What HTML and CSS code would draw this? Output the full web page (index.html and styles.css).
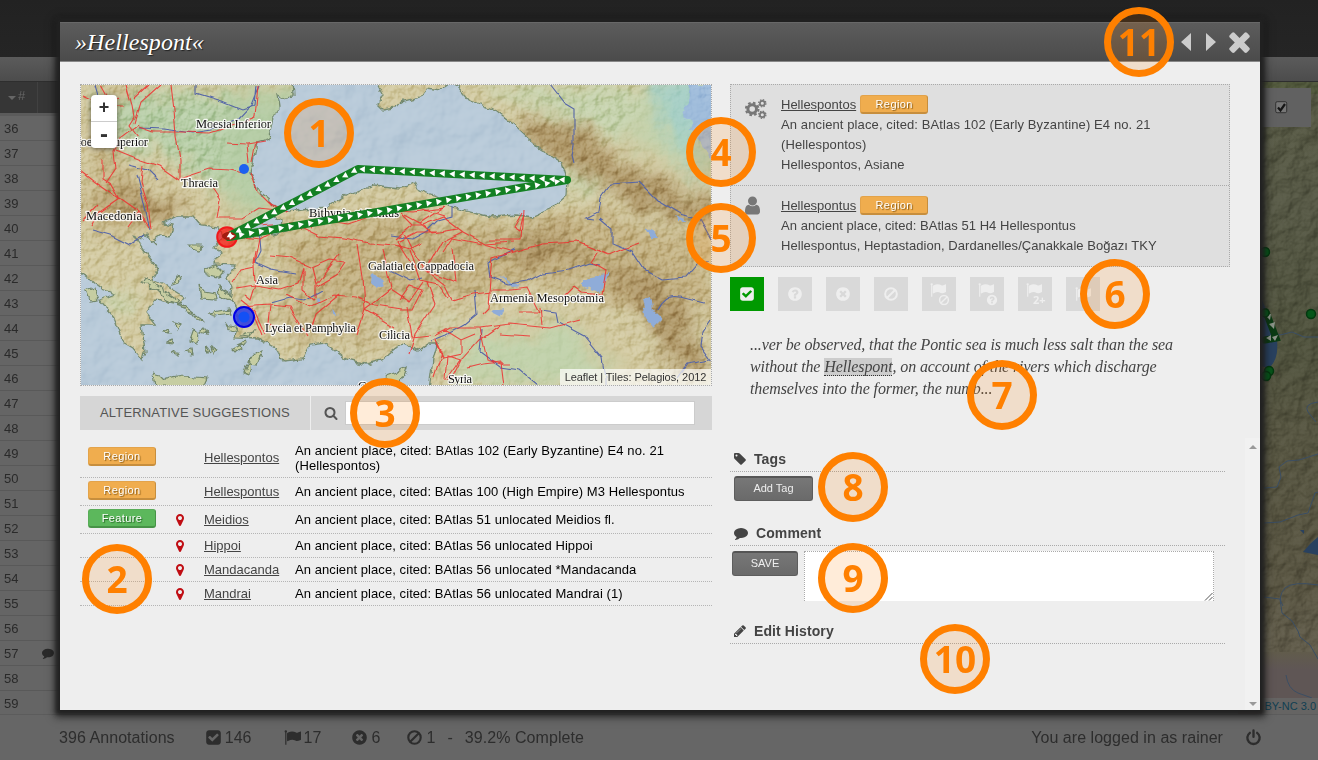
FILE: index.html
```html
<!DOCTYPE html>
<html lang="en">
<head>
<meta charset="utf-8">
<title>Hellespont</title>
<link rel="stylesheet" href="styles.css">
</head>
<body>
<svg class="defs" width="0" height="0">
  <defs>
    <symbol id="i-check" viewBox="0 0 1792 1792"><path d="M813 1299l614-614q19-19 19-45t-19-45l-102-102q-19-19-45-19t-45 19l-467 467-211-211q-19-19-45-19t-45 19l-102 102q-19 19-19 45t19 45l358 358q19 19 45 19t45-19zm851-883v960q0 119-84.5 203.5t-203.5 84.5h-960q-119 0-203.5-84.5t-84.5-203.5v-960q0-119 84.5-203.5t203.5-84.5h960q119 0 203.5 84.5t84.5 203.5z"/></symbol>
    <symbol id="i-times-circle" viewBox="0 0 1792 1792"><path d="M1277 1122q0-26-19-45l-181-181 181-181q19-19 19-45 0-27-19-46l-90-90q-19-19-46-19-26 0-45 19l-181 181-181-181q-19-19-45-19-27 0-46 19l-90 90q-19 19-19 46 0 26 19 45l181 181-181 181q-19 19-19 45 0 27 19 46l90 90q19 19 46 19 26 0 45-19l181-181 181 181q19 19 45 19 27 0 46-19l90-90q19-19 19-46zm387-226q0 209-103 385.5t-279.5 279.5-385.5 103-385.5-103-279.5-279.5-103-385.5 103-385.5 279.5-279.5 385.5-103 385.5 103 279.5 279.5 103 385.5z"/></symbol>
    <symbol id="i-question" viewBox="0 0 1792 1792"><path d="M1024 1376v-192q0-14-9-23t-23-9h-192q-14 0-23 9t-9 23v192q0 14 9 23t23 9h192q14 0 23-9t9-23zm256-672q0-88-55.5-163t-138.5-116-170-41q-243 0-371 213-15 24 8 42l132 100q7 6 19 6 16 0 25-12 53-68 86-92 34-24 86-24 48 0 85.5 26t37.5 59q0 38-20 61t-68 45q-63 28-115.5 86.5t-52.5 125.5v36q0 14 9 23t23 9h192q14 0 23-9t9-23q0-19 21.5-49.5t54.5-49.5q32-18 49-28.5t46-35 44.5-48 28-60.5 12.5-81zm384 192q0 209-103 385.5t-279.5 279.5-385.5 103-385.5-103-279.5-279.5-103-385.5 103-385.5 279.5-279.5 385.5-103 385.5 103 279.5 279.5 103 385.5z"/></symbol>
    <symbol id="i-ban" viewBox="0 0 1792 1792"><g fill="none" stroke="currentColor" stroke-width="225"><circle cx="896" cy="896" r="655"/><path d="M1350 442L442 1350"/></g></symbol>
    <symbol id="i-flag" viewBox="0 0 1792 1792"><path d="M320 256q0 72-64 110v1266q0 13-9.500 22.500t-22.500 9.500h-64q-13 0-22.500-9.500t-9.500-22.500v-1266q-64-38-64-110 0-53 37.500-90.500t90.500-37.500 90.500 37.500 37.500 90.500zm1472 64v763q0 25-12.500 38.500t-39.500 27.500q-215 116-369 116-61 0-123.500-22t-108.500-48-115.500-48-142.500-22q-192 0-464 146-17 9-33 9-26 0-45-19t-19-45v-742q0-32 31-55 21-14 79-43 236-120 421-120 107 0 200 29t219 88q38 19 88 19 54 0 117.500-21t110-47 88-47 54.500-21q26 0 45 19t19 45z"/></symbol>
    <symbol id="i-tag" viewBox="0 0 1792 1792"><path d="M576 448q0-53-37.500-90.500t-90.500-37.500-90.500 37.500-37.500 90.500 37.500 90.500 90.500 37.500 90.500-37.500 37.500-90.500zm1067 576q0 53-37 90l-491 492q-39 37-91 37-53 0-90-37l-715-716q-38-37-64.500-101t-26.500-117v-416q0-52 38-90t90-38h416q53 0 117 26.500t102 64.500l715 714q37 39 37 91z"/></symbol>
    <symbol id="i-comment" viewBox="0 0 1792 1792"><path d="M1792 896q0 174-120 321.500t-326 233-450 85.500q-70 0-145-8-198 175-460 242-49 14-114 22-17 2-30.500-9t-17.500-29v-1q-3-4-.5-12t2-10 4.500-9.500l6-9 7-8.500 8-9q7-8 31-34.500t34.500-38 31-39.500 32.500-51 27-59 26-76q-157-89-247.500-220t-90.500-281q0-130 71-248.500t191-204.500 286-136.500 348-50.500q244 0 450 85.500t326 233 120 321.500z"/></symbol>
    <symbol id="i-pencil" viewBox="0 0 1792 1792"><path d="M491 1536l91-91-235-235-91 91v107h128v128h107zm523-928q0-22-22-22-10 0-17 7l-542 542q-7 7-7 17 0 22 22 22 10 0 17-7l542-542q7-7 7-17zm-54-192l416 416-832 832h-416v-416zm683 96q0 53-37 90l-166 166-416-416 166-165q36-38 90-38 53 0 91 38l235 234q37 39 37 91z"/></symbol>
    <symbol id="i-search" viewBox="0 0 1792 1792"><path d="M1216 832q0-185-131.500-316.500t-316.500-131.500-316.500 131.500-131.500 316.500 131.500 316.500 316.500 131.500 316.500-131.500 131.500-316.500zm512 832q0 52-38 90t-90 38q-54 0-90-38l-343-342q-179 124-399 124-143 0-273.500-55.500t-225-150-150-225-55.500-273.500 55.500-273.500 150-225 225-150 273.500-55.500 273.500 55.500 225 150 150 225 55.500 273.500q0 220-124 399l343 343q37 37 37 90z"/></symbol>
    <symbol id="i-marker" viewBox="0 0 1792 1792"><path d="M1152 640q0-106-75-181t-181-75-181 75-75 181 75 181 181 75 181-75 75-181zm256 0q0 109-33 179l-364 774q-16 33-47.500 52t-67.500 19-67.500-19-46.500-52l-365-774q-33-70-33-179 0-212 150-362t362-150 362 150 150 362z"/></symbol>
    <symbol id="i-user" viewBox="0 0 1792 1792"><path d="M1536 1399q0 109-62.500 187t-150.500 78h-854q-88 0-150.500-78t-62.500-187q0-85 8.500-160.500t31.500-152 58.500-131 94-89 134.500-34.500q131 128 313 128t313-128q76 0 134.500 34.500t94 89 58.500 131 31.500 152 8.500 160.500zm-256-887q0 159-112.500 271.500t-271.500 112.500-271.500-112.500-112.500-271.500 112.500-271.500 271.500-112.500 271.500 112.500 112.500 271.500z"/></symbol>
    <symbol id="i-times" viewBox="0 0 1792 1792"><path d="M1490 1322q0 40-28 68l-136 136q-28 28-68 28t-68-28l-294-294-294 294q-28 28-68 28t-68-28l-136-136q-28-28-28-68t28-68l294-294-294-294q-28-28-28-68t28-68l136-136q28-28 68-28t68 28l294 294 294-294q28-28 68-28t68 28l136 136q28 28 28 68t-28 68l-294 294 294 294q28 28 28 68z"/></symbol>
    <symbol id="i-power" viewBox="0 0 16 16"><g fill="none" stroke="currentColor" stroke-width="2.200" stroke-linecap="round"><path d="M4.600 3.600a5.800 5.800 0 1 0 6.800 0M8 1.300v6"/></g></symbol>
    <symbol id="i-cogs" viewBox="0 0 22 20">
      <g fill="none" stroke="currentColor">
        <circle cx="7.200" cy="10" r="4.300" stroke-width="3"/><circle cx="7.200" cy="10" r="6.300" stroke-width="2" stroke-dasharray="2.600 2.348"/>
        <circle cx="17.300" cy="4.300" r="2.400" stroke-width="1.700"/><circle cx="17.300" cy="4.300" r="3.600" stroke-width="1.300" stroke-dasharray="1.500 1.327"/>
        <circle cx="17.300" cy="15.800" r="2.400" stroke-width="1.700"/><circle cx="17.300" cy="15.800" r="3.600" stroke-width="1.300" stroke-dasharray="1.500 1.327"/>
      </g>
    </symbol>
  </defs>
</svg>

<div class="page">
  <div class="topbar"></div>
  <div class="subbar"></div>
  <div class="workspace">
    <div class="rows">
      <div class="rows-head"><span class="sort"></span>#</div>
      <div class="row">36</div><div class="row">37</div><div class="row">38</div><div class="row">39</div>
      <div class="row">40</div><div class="row">41</div><div class="row">42</div><div class="row">43</div>
      <div class="row">44</div><div class="row">45</div><div class="row">46</div><div class="row">47</div>
      <div class="row">48</div><div class="row">49</div><div class="row">50</div><div class="row">51</div>
      <div class="row">52</div><div class="row">53</div><div class="row">54</div><div class="row">55</div>
      <div class="row">56</div><div class="row">57<svg class="row-note"><use href="#i-comment"/></svg></div>
      <div class="row">58</div><div class="row">59</div>
    </div>
    <div class="bigmap">
      <svg viewBox="1238 82 80 632" width="80" height="632">
        <defs>
          <filter id="relief2" x="0" y="0" width="100%" height="100%" color-interpolation-filters="sRGB"><feTurbulence type="fractalNoise" baseFrequency=".06" numOctaves="4" seed="8"/><feDiffuseLighting surfaceScale="5" diffuseConstant=".62" lighting-color="#fff"><feDistantLight azimuth="225" elevation="55"/></feDiffuseLighting></filter>
          <linearGradient id="bm" x1="0" y1="0" x2="0" y2="1"><stop offset="0" stop-color="#575944"/><stop offset=".2" stop-color="#565845"/><stop offset=".4" stop-color="#4f523d"/><stop offset=".55" stop-color="#565541"/><stop offset=".8" stop-color="#5a5643"/><stop offset=".9" stop-color="#615c4b"/><stop offset=".93" stop-color="#5f5655"/><stop offset="1" stop-color="#5f5655"/></linearGradient>
        </defs>
        <rect x="1238" y="82" width="80" height="632" fill="url(#bm)"/>
        <path d="M1238 82h80v12h-80z" fill="#4b5733" opacity=".5"/>
        <rect class="relief" x="1238" y="82" width="80" height="570" filter="url(#relief2)" opacity=".5"/>
        <g fill="none" stroke="#3b4e64" stroke-width="1">
          <path d="M1260 320l8 10 12 5 12-3 12 5h14M1318 402q-15 2-10 10l8 10M1264 488l13-1 4-10-2-10 8-6 12-1 19-6M1264 523l16-1 18-7 10-2 7-20 3-1M1264 597l16 2 2 14 10 8 6 10 2 6 10 8 8 14M1318 585q-25-4-33 3-8 9-2 18M1286 675q2 14 12 18l14 5"/>
        </g>
        <path d="M1262 300l7 16 8 24q2 20-8 28l-9-2zM1303 552l8-9 7-6v18zM1300 530h4v4z" fill="#29415f"/>
        <path d="M1266 312l10 26-11 2" fill="none" stroke="#0b3a13" stroke-width="7" stroke-linecap="round"/>
        <path d="M1265 315l6-1-1 6zM1269 324l6-2-1 7zM1266 338l5-3v6zM1272 337l6-2-3 6z" fill="#8b9388"/>
        <g fill="#07561a" stroke="#04380f" stroke-width="1.500"><circle cx="1265" cy="252" r="4.500"/><circle cx="1265" cy="313" r="4"/><circle cx="1311" cy="314" r="4.500"/><circle cx="1269" cy="371" r="4.500"/><circle cx="1266" cy="376" r="4.500"/></g>
      </svg>
      <div class="toggle"><svg viewBox="0 0 13 13" width="13" height="13"><rect x=".7" y=".7" width="11" height="11" rx="1.500" fill="#777" stroke="#333"/><path d="M3 6.500l2.500 3L10 3" fill="none" stroke="#151515" stroke-width="2.200"/></svg></div>
      <div class="licence">BY-NC 3.0</div>
    </div>
  </div>
  <div class="footer">
    <span class="total">396 Annotations</span>
    <span class="stat s1"><svg><use href="#i-check"/></svg>146</span>
    <span class="stat s2"><svg><use href="#i-flag"/></svg>17</span>
    <span class="stat s3"><svg><use href="#i-times-circle"/></svg>6</span>
    <span class="stat s4"><svg><use href="#i-ban"/></svg>1</span>
    <span class="dash">-</span><span>39.2% Complete</span>
    <span class="user">You are logged in as rainer</span>
    <svg class="power"><use href="#i-power"/></svg>
  </div>
</div>

<div class="modal">
  <div class="modal-head">
    <span class="title">»Hellespont«</span>
    <svg class="nav" viewBox="0 0 40 20" width="40" height="20"><path d="M12 1v18L2 10zM27 1v18l10-9z"/></svg>
    <svg class="close"><use href="#i-times"/></svg>
  </div>
  <div class="modal-body">
    <div class="left">
      <div class="map">
        <svg viewBox="81 85 630 300" width="630" height="300">
          <defs>
            <filter id="rough" x="-5%" y="-5%" width="110%" height="110%" color-interpolation-filters="sRGB"><feTurbulence type="fractalNoise" baseFrequency=".11" numOctaves="3" seed="4"/><feDisplacementMap in="SourceGraphic" scale="7" xChannelSelector="R" yChannelSelector="G"/></filter>
            <filter id="wiggle" x="-5%" y="-5%" width="110%" height="110%" color-interpolation-filters="sRGB"><feTurbulence type="fractalNoise" baseFrequency=".06" numOctaves="1" seed="11"/><feDisplacementMap in="SourceGraphic" scale="6" xChannelSelector="R" yChannelSelector="G"/></filter>
            <filter id="soft" x="-30%" y="-30%" width="160%" height="160%" color-interpolation-filters="sRGB"><feGaussianBlur stdDeviation="9" result="b"/><feTurbulence type="fractalNoise" baseFrequency=".04" numOctaves="4" seed="2"/><feDisplacementMap in="b" scale="30" xChannelSelector="R" yChannelSelector="G"/></filter>
            <filter id="relief" x="0" y="0" width="100%" height="100%" color-interpolation-filters="sRGB"><feTurbulence type="fractalNoise" baseFrequency=".1" numOctaves="5" seed="21"/><feDiffuseLighting surfaceScale="4" diffuseConstant=".68" lighting-color="#fff"><feDistantLight azimuth="225" elevation="52"/></feDiffuseLighting></filter>
            <filter id="seabed" x="0" y="0" width="100%" height="100%" color-interpolation-filters="sRGB"><feTurbulence type="fractalNoise" baseFrequency=".022" numOctaves="4" seed="6"/><feDiffuseLighting surfaceScale="7" diffuseConstant=".62" lighting-color="#fff"><feDistantLight azimuth="225" elevation="58"/></feDiffuseLighting></filter>
            <mask id="hills"><rect x="81" y="85" width="630" height="300" fill="#ddd"/><g filter="url(#soft)"><path d="M235 85h143l-90 130h-70zM640 85h71v110l-90-50zM460 320l130 0 50 65H450z" fill="#333"/></g></mask>
            <path id="seas" d="M292 80L293 96 283 98 277 95 279 108 273 117 269 138 257 142 253 162 250 172 257 190 277 207 288 212 303 210 327 208 347 195 373 185 400 188 415 183 418 190 437 197 452 207 473 213 493 217 517 215 533 217 553 208 567 195 568 182 562 163 537 147 517 128 497 112 468 100 457 87 450 84 441 90 427 88 420 97 400 102 395 108 383 110 378 105 383 95 375 80z
              M237 235l10-9 14-3 9-8 11 5-1 6 10 4-16 5-9-2-9 4-12 1z
              M133 234l4 8 10-8 3 8 10-7 10 2 3-12-10-2 14-7 16 0 8 9 18 2 3 11-7 11 6 3-8 12 23 1-9 12 5 11-2 10 8 13 0 12-4 14 24 1 17 10 8 13 19-2 8-14 16-2 20 16 20 5 16-4 20-16 16 7 10-7 9 0-4 16-5 35H70V290l12-17 8 7 12 9 13 5-15 6 12 14 11 28 10 6 10 12 2-8-3-28 13 0-9-11 9-13 24 5 6-8-16-10-17-7 6-11-11-15-9-13z"/>
            <clipPath id="seaclip"><use href="#seas"/></clipPath>
            <path id="isles" d="M189 245h12l-3 6-8-2zM206 270l10-5 7 7-4 5-12-2zM199 285l5 7 11 2 1 6-15-1zM218 285l11 8 3 8-13-5zM153 373l8 2 4 4 18-3 24 2-4 9h-48zM248 361l9-9 5-1-6 15-8-1zM232 349l8-4 1 3-6 4zM145 277l14 10 16 11 4 7-10-3-12-12-15-8zM208 313l22-4 2 4-18 2zM244 373l6-16-1 18zM172 285l4-8 4 2-2 4zM94 288l4 12-8 1-4-10zM178 300l8 8 8 6-8-2zM190 340l4-12 4 4-1 11zM174 322l7 2-4 5zM200 332l4-4 3 6zM185 352l6-2 1 4zM168 343l5-4 2 5zM226 325l9 2 2 5-7-2zM212 347l5 3-3 3zM192 315l10 4 3 3-9-2zM172 352l6 0 1 3zM378 385l8-9 22-8-3 9-12 8zM152 240l6 6zM164 332l4-3 2 4zM206 345l2 8 3-2zM240 335l14-4-4 5zM237 345l9-4 1 3z"/>
          </defs>
          <rect x="81" y="85" width="630" height="300" fill="#d2c9a0"/>
          <g filter="url(#soft)">
            <path d="M100 92h275l-70 20-40 110-30-20-70-50H90z" fill="#b6cda6"/>
            <path d="M465 85h246v100l-70-40-60-20-40-15z" fill="#c4d1ab"/>
            <path d="M560 165l45 20-30 10zM460 340l110-15 50 60H450zM85 310l30-20 25 20zM415 325l30-10 5 12z" fill="#c2d2ac"/>
            <path d="M645 85h40l20 60 6 40-30-30z" fill="#a9d1c2"/>
            <path d="M82 180l50-5 60 35-40 20-60 0zM85 120l30 0 10 60-30-10zM90 85h60l-30 20zM280 240l110-30 90 20 110-20 121 40v60l-60 10-80-40-160 20-60 30-70-40zM270 310l60 0 20 20-50 15zM340 335l50-5-20 22z" fill="#c3b182"/>
            <path d="M515 120l60 5 60 45 76 30v30l-70-20-60-40-55-20zM90 195l50-5 50 20-40 10zM500 235l60-5 40 30-70 5zM600 260l60 20 40 60 8 40-30-10-40-60z" fill="#a98f5e" opacity=".9"/>
          </g>
          <path d="M660 80h55v75q-8-12-16-20l-12-10-20-2z" fill="#a7cfc6" filter="url(#soft)"/>
          <path d="M690 84h24v80l-14-24-10-10 2-8-12-8 8-12z" fill="#9fbcdb" filter="url(#rough)"/>
          <g class="relief" mask="url(#hills)"><rect x="81" y="85" width="630" height="300" filter="url(#relief)"/></g>
          <use href="#seas" filter="url(#rough)" fill="#b8cad9" stroke="#768b70" stroke-width="1.300"/>
          <g class="relief" clip-path="url(#seaclip)" opacity=".6"><rect x="71" y="75" width="650" height="320" filter="url(#seabed)"/></g>
          <g filter="url(#rough)">
            <use href="#isles" fill="#c6cda2" stroke="#72866a" stroke-width="1.200"/>
            <path d="M583 279l14-3 13-4-7 10-2 11-10-3-8-4zM642 298l9-2 2 14 9 9-9 9-7-9zM372 273l8 4 5 8-8 4-6-6zM331 305l6 10 3 0-8-2zM318 296l3 10-4-6zM500 275l12 8 10 3-10 1zM490 312l14-3-4 8zM645 228l10 5 3 5-8 0zM675 215l14 6-10 0z" fill="#8facd8"/>
          </g>
          <g class="rivers" filter="url(#wiggle)">
            <path d="M196 85v8l26 8 20 8 12-4 2-20M138 128l26 1 28 4 20-3 25-10 14-15 8-20M95 85l4 14-6 10M550 85l14 18 10 6 0 36-2 10 2 8M640 182l-30 2-10 14-2 14-12 6 8 1M640 182l20 20 20 12 20 6 11 20M600 218l12 10v15l20 8 12 18 18 10 24-2 12-14 11-1M600 265l-10-2-20 7-28 3-15 8-18 3-18-7-2-14 26-14M474 290l2 25-12 10-18 10-15 6M540 310l16 2 2 10 26 14 18 22 3 20v10M482 330l-2 22 20 15 20 3 18 15M711 320l-8 12-2 14 12 16M711 360l-24 4-10 14M390 270l20 10 12-3M258 230l2 22-5 10 16 7 24 4M271 303l18-5 16 2 18-10M145 235l-15 10-20-10-18-5M137 175l5 20 8 35M128 165l20 5 10 10M452 207l0 10-15 4-10 10-15 8-22-3M658 310q8-16 22-13l24 6"/>
          </g>
          <g class="roads" filter="url(#wiggle)">
            <path d="M171 85l3 25 2 25 4 26 0 18M180 179l30-10 20 1 13 3M138 127l14 5 30 0 28 1 25-8 20-8 3-32M126 85l6 20 2 12-5 8 9 12M101 85l10 18 8-6M82 96l22 10 20 0M160 85l-20 18-6 20M149 85l-15 14M138 125l-16 12-8 14 2 18-10 15M116 150l25 10 18 6 20 14M103 160v20l8 5 8 14M143 165l-2 18 7 22 3 24M119 198l-20 14-8 14M119 198l20 14-10 14M139 212l10 15M250 172l8 20 14 14 15 6M227 143l20 1 18-3M247 144l2 19M252 163l4-22M212 188l8 12-3 18M218 218l24 0 16-10 20 2M80 170l18 14 20 14M97 205l-15 16"/>
            <path d="M237 237l22 3 18-10 26-2 16 8 24 2 26 5 26 2 14 4 12-6M259 240l-5 24 1 20-5 16-6-5M232 282l8-12 14-3M235 288l20-3 25 4 18-6 5-16M270 256l20 2 22 10 18-8 14 2M312 268l4 16 0 14M316 284l24-30M255 252l-2 12M303 268l0 22 12 10M285 295l25 12 25-12 20 2 20 8 27 4M358 245l5 32 2 32M365 309l-8 26M365 309l26-20-8-40M365 309l30 18M391 290l18 12 14-20M240 307l30-2 20 2 18 30M270 306l-2 16 12 8M340 294l-24 20-5 16M345 262l-8 12-20 12M237 237l20-12 30-2 40-2M310 228l12-8 26 4 30-10 12-4 24 2 30-4M240 300l15 12 10 22M262 335l-8-20"/>
            <path d="M395 240l18-15 10 0 20-8 20 15 22 12 30-2M405 215l15 8 15-10 10-6M420 223l12 10 26-4M382 210l30-4 32 10M413 225l-10-10-2-8M462 232l-20 10-16 28-15-6-14-22 20-10 22 0M426 270l30 12-4-34M403 232l8 16 15 22 18 14 8 16 20-6 20-2M482 244l-30-6-10 15M490 240l32 0 2-30 M485 244l28 8 30-8 34-2 20 8 12 5 14-6 16-6M513 252l-20 6-2 20-2 30-6 6M491 290l20 0 16-2 8 16 4 8-20 0M600 250l-8 12 14 8-4 24-20-2-8-6-10 10M410 250l10 30 18 4 10 14M400 300l10-14 12 4-10 20-12 0M427 282l8 22-20 30-6 20M407 307l5 30 18-2M522 213l-8 14 6 4 3-14M480 328l-30 0-15 8 M480 328l30-4 40 4 30-8M480 328l4 18 3 14 14 4 8 0M500 334l30 2 M445 330l16 10 14-6M461 340l0 14-18 4M443 358l-8-20M445 380l2-24 14 4-14 20M501 362l3 24M467 368l16-4 18-2M540 307l2 18M500 326l-20 14-18 20-10 20M436 340l6 12-8 25"/>
          </g>
          <g class="labels">
            <text x="196" y="128" textLength="75">Moesia Inferior</text>
            <text x="70" y="146" textLength="78">Moesia Superior</text>
            <text x="181" y="187" textLength="37">Thracia</text>
            <text x="86" y="220" textLength="56">Macedonia</text>
            <text x="309" y="217" textLength="90">Bithynia et Pontus</text>
            <text x="256" y="284" textLength="22">Asia</text>
            <text x="368" y="270" textLength="106">Galatia et Cappadocia</text>
            <text x="265" y="332" textLength="91">Lycia et Pamphylia</text>
            <text x="379" y="339" textLength="31">Cilicia</text>
            <text x="490" y="302" textLength="114">Armenia Mesopotamia</text>
            <text x="448" y="383" textLength="24">Syria</text>
            <text x="358" y="390" textLength="40">Cyprus</text>
          </g>
          <circle cx="244" cy="169" r="5" fill="#1c62f0"/>
          <circle cx="227" cy="237" r="9.800" fill="#f00" fill-opacity=".65" stroke="#f0191b" stroke-width="2"/>
          <path d="M229 236L358 169 567 180 229 237" fill="none" stroke="#138023" stroke-width="8" stroke-linejoin="round" stroke-linecap="round"/>
          <ellipse cx="229" cy="236" rx="7" ry="4" fill="#a31c10"/>
          <g id="arrows" fill="#fff"></g>
          <circle cx="244" cy="317" r="10" fill="#2a3be6" fill-opacity=".85" stroke="#0000e6" stroke-width="2"/>
          <circle cx="244" cy="317" r="5.500" fill="#1450f5"/>
        </svg>
        <div class="zoomctl"><div>+</div><div class="minus">-</div></div>
        <div class="attribution">Leaflet | Tiles: Pelagios, 2012</div>
      </div>
      <div class="altbar">
        <div class="altlabel">ALTERNATIVE SUGGESTIONS</div>
        <div class="altsearch"><svg><use href="#i-search"/></svg><div class="field"></div></div>
      </div>
      <div class="suggestions">
        <div class="sug tall"><div><b class="badge">Region</b></div><div></div><div><u>Hellespontos</u></div><div>An ancient place, cited: BAtlas 102 (Early Byzantine) E4 no. 21<br>(Hellespontos)</div></div>
        <div class="sug mid"><div><b class="badge">Region</b></div><div></div><div><u>Hellespontus</u></div><div>An ancient place, cited: BAtlas 100 (High Empire) M3 Hellespontus</div></div>
        <div class="sug mid"><div><b class="badge green">Feature</b></div><div><svg><use href="#i-marker"/></svg></div><div><u>Meidios</u></div><div>An ancient place, cited: BAtlas 51 unlocated Meidios fl.</div></div>
        <div class="sug"><div></div><div><svg><use href="#i-marker"/></svg></div><div><u>Hippoi</u></div><div>An ancient place, cited: BAtlas 56 unlocated Hippoi</div></div>
        <div class="sug"><div></div><div><svg><use href="#i-marker"/></svg></div><div><u>Mandacanda</u></div><div>An ancient place, cited: BAtlas 56 unlocated *Mandacanda</div></div>
        <div class="sug"><div></div><div><svg><use href="#i-marker"/></svg></div><div><u>Mandrai</u></div><div>An ancient place, cited: BAtlas 56 unlocated Mandrai (1)</div></div>
      </div>
    </div>
    <div class="right">
      <div class="places">
        <div class="place"><svg class="cogs"><use href="#i-cogs"/></svg><div class="info"><div class="name"><u>Hellespontos</u><b class="badge">Region</b></div><div class="cite">An ancient place, cited: BAtlas 102 (Early Byzantine) E4 no. 21<br>(Hellespontos)<br>Hellespontos, Asiane</div></div></div>
        <div class="place"><svg class="person"><use href="#i-user"/></svg><div class="info"><div class="name"><u>Hellespontus</u><b class="badge">Region</b></div><div class="cite two">An ancient place, cited: BAtlas 51 H4 Hellespontus<br>Hellespontus, Heptastadion, Dardanelles/Çanakkale Boğazı TKY</div></div></div>
      </div>
      <div class="actions">
        <div class="act on"><svg><use href="#i-check"/></svg></div>
        <div class="act"><svg><use href="#i-question"/></svg></div>
        <div class="act"><svg><use href="#i-times-circle"/></svg></div>
        <div class="act"><svg><use href="#i-ban"/></svg></div>
        <div class="act flag"><svg><use href="#i-flag"/></svg><svg class="sub"><use href="#i-ban"/></svg></div>
        <div class="act flag"><svg><use href="#i-flag"/></svg><svg class="sub"><use href="#i-question"/></svg></div>
        <div class="act flag"><svg><use href="#i-flag"/></svg><span class="sub2">2+</span></div>
        <div class="act"><svg><use href="#i-flag"/></svg></div>
      </div>
      <div class="quote">...ver be observed, that the Pontic sea is much less salt than the sea<br>without the <span class="hit">Hellespont</span>, on account of the rivers which discharge<br>themselves into the former, the numb...</div>
      <div class="details">
        <div class="sections">
          <div class="section tags"><h3><svg><use href="#i-tag"/></svg>Tags</h3><div class="line"><span class="btn add">Add Tag</span></div></div>
          <div class="section comment"><h3><svg><use href="#i-comment"/></svg>Comment</h3><div class="line"><span class="btn save">SAVE</span><div class="textarea"><svg viewBox="0 0 9 9" width="9" height="9"><path d="M1 8.500L8.500 1M5 8.500L8.500 5" stroke="#555" fill="none"/></svg></div></div></div>
          <div class="section"><h3><svg><use href="#i-pencil"/></svg>Edit History</h3></div>
        </div>
        <div class="scrollbar"><i class="up"></i><i class="down"></i></div>
      </div>
    </div>
  </div>
</div>

<div class="pin p1">1</div><div class="pin p2">2</div><div class="pin p3">3</div><div class="pin p4">4</div>
<div class="pin p5">5</div><div class="pin p6">6</div><div class="pin p7">7</div><div class="pin p8">8</div>
<div class="pin p9">9</div><div class="pin p10">10</div><div class="pin p11">11</div>
<script src="route.js"></script>
</body>
</html>
```

FILE: route.js
```javascript
// Direction arrows, evenly spaced along the closed route.
const stops = [[227, 237], [567, 180], [358, 169], [227, 237]];
const layer = document.getElementById('arrows');
for (let i = 0; i < stops.length - 1; i++) {
  const [x1, y1] = stops[i];
  const [x2, y2] = stops[i + 1];
  const length = Math.hypot(x2 - x1, y2 - y1);
  const angle = Math.atan2(y2 - y1, x2 - x1) * 180 / Math.PI;
  for (let d = 5; d < length; d += 10) {
    const arrow = document.createElementNS('http://www.w3.org/2000/svg', 'path');
    arrow.setAttribute('d', 'M-2.6 -3.1L3 0L-2.6 3.1z');
    arrow.setAttribute('transform', `translate(${x1 + (x2 - x1) * d / length} ${y1 + (y2 - y1) * d / length}) rotate(${angle})`);
    layer.appendChild(arrow);
  }
}
```

FILE: styles.css
```css
* { box-sizing: border-box; }
body { margin: 0; width: 1318px; height: 760px; overflow: hidden; position: relative; font: 13px/15px "Liberation Sans", Arial, sans-serif; background: #666; color: #444; }
svg { display: block; fill: currentColor; }
.defs { position: absolute; }
.relief { mix-blend-mode: soft-light; }

/* page behind the dialog */
.page { display: flex; flex-direction: column; height: 760px; }
.topbar { height: 57px; background: linear-gradient(#222, #252525); }
.subbar { height: 25px; background: linear-gradient(#5b5b5b, #4c4c4c); border-bottom: 1px solid #2e2e2e; }
.workspace { height: 632px; display: flex; justify-content: space-between; overflow: hidden; }
.rows { width: 80px; color: #2a2a2a; }
.rows-head { height: 34px; padding: 6px 0 0 8px; background: linear-gradient(#363636 31px, #5b5b5b 31px); color: #666; display: flex; gap: 2px; }
.rows-head::after { content: ""; width: 1px; height: 31px; background: #414141; margin: -6px 0 0 10px; }
.sort { width: 8px; height: 0; border: 4px solid transparent; border-top-color: #666; border-bottom: 0; margin-top: 8px; }
.row { height: 25px; line-height: 26px; padding-left: 4px; border-bottom: 1px solid #595959; background: #656565; display: flex; }
.row-note { width: 12px; height: 12px; margin: 6px 0 0 24px; }
.bigmap { width: 80px; position: relative; }
.toggle { position: absolute; right: 7px; top: 6px; width: 50px; height: 39px; background: #616161; padding: 13px 0 0 14px; }
.licence { position: absolute; right: 0; bottom: 0; width: 56px; height: 16px; background: #656463; color: #103f52; font-size: 11px; line-height: 16px; text-align: right; padding-right: 2px; white-space: nowrap; }
.footer { height: 46px; border-top: 1px solid #5c5c5c; padding: 0 56px 0 59px; display: flex; align-items: center; font-size: 16px; letter-spacing: .06px; color: #2d2d2d; white-space: nowrap; }
.footer svg { width: 17px; height: 17px; }
.stat { display: flex; align-items: center; gap: 3px; }
.s1 { margin-left: 30px; }
.s2 { margin-left: 32px; }
.s3 { margin-left: 30px; }
.s4 { margin-left: 26px; }
.dash { margin: 0 12px; }
.user { margin-left: auto; letter-spacing: .04px; }
.footer .power { margin-left: 22px; }

/* dialog */
.modal { position: absolute; left: 60px; top: 22px; width: 1200px; height: 688px; background: #eee; box-shadow: 0 0 4px 4px #222, 0 2px 8px 5px rgba(20,20,20,.7); }
.modal-head { height: 40px; background: linear-gradient(#5c5c5c, #4b4b4b); border-top: 1px solid #686868; border-bottom: 1px solid #888; display: flex; align-items: center; padding-left: 15px; color: #ccc; }
.title { font: italic 24px/38px "Liberation Serif", "Times New Roman", serif; letter-spacing: .08px; color: #fff; text-shadow: 1px 1px 1px #222; margin-right: auto; }
.nav { margin-right: 5px; }
.close { width: 31px; height: 31px; margin: -2px 5px 0 0; }
.modal-body { display: flex; gap: 18px; padding: 22px 0 0 20px; height: 648px; }
.left { width: 632px; }
.map { position: relative; height: 302px; border: 1px dotted #aaa; overflow: hidden; }
.roads { fill: none; stroke: #ee2f2f; stroke-width: 1.1; stroke-opacity: .85; }
.rivers { fill: none; stroke: #5666a8; stroke-width: 1.1; }
.labels { font-family: "Liberation Serif", serif; font-size: 12.5px; fill: #111; stroke: #fff; stroke-width: 2.4px; stroke-opacity: .85; paint-order: stroke; stroke-linejoin: round; }
.zoomctl { position: absolute; left: 10px; top: 10px; width: 26px; height: 53px; border-radius: 4px; background: #fff; box-shadow: 0 1px 5px rgba(0,0,0,.5); font: bold 18px/25px "Liberation Sans", sans-serif; text-align: center; color: #333; }
.zoomctl div { height: 27px; }
.zoomctl div:first-child { border-bottom: 1px solid #ccc; }
.zoomctl .minus { font-size: 24px; line-height: 24px; }
.attribution { position: absolute; right: 0; bottom: 0; width: 151px; height: 16px; background: rgba(255,255,255,.7); font-size: 11px; line-height: 16px; letter-spacing: -.06px; text-align: center; color: #333; white-space: nowrap; }
.altbar { margin-top: 10px; height: 34px; display: flex; gap: 1px; }
.altbar > div { background: #d6d6d6; height: 34px; }
.altlabel { width: 230px; padding-left: 20px; line-height: 33px; letter-spacing: .17px; color: #555; }
.altsearch { flex: 1; display: flex; align-items: center; padding-left: 13px; gap: 7px; color: #555; }
.altsearch svg { width: 14px; height: 14px; }
.field { width: 350px; height: 24px; background: #fff; border: 1px solid #ccc; }
.suggestions { padding-top: 9px; color: #000; }
.sug { display: grid; grid-template-columns: 82px 33px 91px 1fr; height: 24px; align-items: center; border-bottom: 1px dotted #b5b5b5; white-space: nowrap; }
.sug.tall { height: 39px; }
.sug.mid { height: 28px; }
.sug > div:first-child { padding: 0 0 3px 8px; }
.sug > div:nth-child(3) { padding-left: 9px; }
.sug > div:nth-child(4) { padding-left: 9px; letter-spacing: .07px; }
.sug.tall > div:nth-child(3) { padding-bottom: 1px; }
.sug.tall > div:nth-child(4) { letter-spacing: .1px; }
.sug svg { width: 14px; height: 14px; color: #c00d13; margin-left: 11px; }
u { color: #444; text-underline-offset: 1px; }
.badge { display: block; width: 68px; height: 19px; border-radius: 3px; background: #f0ad4e; border: 1px solid #e3a34a; border-right-color: #c78e3d; border-bottom: 2px solid #c78e3d; color: #fff; font: 11px/16px "Liberation Sans", sans-serif; letter-spacing: .4px; text-align: center; text-shadow: 1px 1px 1px #865a17; }
.badge.green { background: #5cb85c; border-color: #58ad58 #469346 #469346 #58ad58; text-shadow: 1px 1px 1px #246524; }

.right { width: 530px; display: flex; flex-direction: column; }
.places { width: 500px; height: 183px; background: #dfdfdf; border: 1px dotted #aaa; }
.place { display: flex; padding: 10px 0 10px 14px; line-height: 20px; white-space: nowrap; color: #444; }
.place:first-child { border-bottom: 1px dotted #aaa; height: 101px; }
.place > svg { color: #777; }
.cogs { width: 22px; height: 20px; margin: 4px 14px 0 0; }
.person { width: 21px; height: 21px; margin: -1px 18px 0 -3px; }
.name { display: flex; gap: 4px; align-items: center; }
.name .badge { margin-bottom: 1px; }
.cite { letter-spacing: .11px; }
.cite.two { letter-spacing: .04px; }
.actions { display: flex; gap: 14px; padding-top: 10px; }
.act { width: 34px; height: 34px; background: #d9d9d9; color: #eee; display: flex; align-items: center; justify-content: center; position: relative; }
.act.on { background: #090; color: #eee; }
.act svg { width: 16px; height: 16px; }
.act.flag { padding: 0 2px 9px 0; }
.act .sub { position: absolute; left: 16px; top: 17px; width: 12px; height: 12px; background: #d9d9d9; border-radius: 6px; }
.sub2 { position: absolute; left: 15px; top: 17px; font: bold 11px/12px "Open Sans", sans-serif; }
.quote { margin-top: 23px; padding-left: 20px; height: 104px; font: italic 16px/22px "Liberation Serif", "Times New Roman", serif; letter-spacing: -.11px; color: #444; white-space: nowrap; }
.hit { background: #ccc; border-bottom: 1px dotted #333; }
.details { flex: 1; display: flex; justify-content: space-between; }
.sections { width: 495px; }
.section { padding-top: 12px; }
.section.tags { height: 74px; }
.section.comment { height: 98px; }
.section h3 { margin: 0; height: 22px; border-bottom: 1px dotted #aaa; font-size: 14px; line-height: 18px; letter-spacing: .1px; color: #444; padding-left: 3px; display: flex; align-items: center; gap: 7px; padding-bottom: 3px; }
h3 svg { width: 14px; height: 14px; }
.comment h3 { padding-left: 4px; gap: 8px; }
.line { display: flex; gap: 6px; padding: 5px 0 0 2px; }
.tags .line { padding: 4px 0 0 4px; }
.btn { height: 25px; border: 1px solid #5d5d5d; border-top: 2px solid #555; border-radius: 3px; background: linear-gradient(#777, #6a6a6a); color: #eee; font-size: 11px; line-height: 21px; text-align: center; }
.add { width: 79px; }
.save { width: 66px; }
.textarea { width: 410px; height: 50px; background: #fff; border: 1px dotted #aaa; border-bottom: 0; display: flex; align-items: flex-end; justify-content: flex-end; }
.scrollbar { width: 15px; background: #f1f1f1; display: flex; flex-direction: column; justify-content: space-between; align-items: center; padding: 7px 0 4px; }
.scrollbar i { border: 4px solid transparent; }
.scrollbar .up { border-top: 0; border-bottom-color: #999; }
.scrollbar .down { border-bottom: 0; border-top-color: #999; }

/* numbered callouts */
.pin { position: absolute; width: 70px; height: 70px; border: 7px solid #ff8000; border-radius: 50%; background: rgba(255,128,0,.15); color: #ff8000; font: bold 37px/56px "Open Sans", sans-serif; text-align: center; }
.p1 { left: 284px; top: 98px; }
.p2 { left: 82px; top: 544px; }
.p3 { left: 350px; top: 378px; }
.p4 { left: 686px; top: 117px; }
.p5 { left: 686px; top: 203px; }
.p6 { left: 1080px; top: 259px; }
.p7 { left: 967px; top: 360px; }
.p8 { left: 818px; top: 452px; }
.p9 { left: 818px; top: 543px; }
.p10 { left: 920px; top: 624px; }
.p11 { left: 1104px; top: 7px; }
```
